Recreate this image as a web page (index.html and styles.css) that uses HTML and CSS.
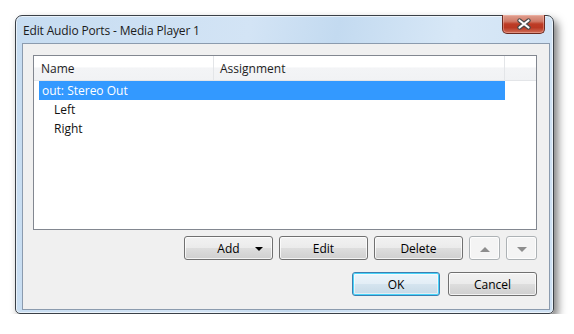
FILE: index.html
```html
<!DOCTYPE html>
<html>
<head>
<meta charset="utf-8">
<link rel="stylesheet" href="styles.css">
</head>
<body>
<div class="window">
  <div class="titlebar">
    <span class="title">Edit Audio Ports - Media Player 1</span>
    <div class="close">
      <svg width="16" height="12" viewBox="0 0 16 12">
        <path d="M3.5 2.5 L12.5 9.5 M12.5 2.5 L3.5 9.5" stroke="#4a4a4a" stroke-width="4.4" stroke-linecap="round"/>
        <path d="M3.5 2.5 L12.5 9.5 M12.5 2.5 L3.5 9.5" stroke="#ffffff" stroke-width="2.2" stroke-linecap="round"/>
      </svg>
    </div>
  </div>
  <div class="client">
    <div class="listbox">
      <div class="header">
        <div class="hcol c1">Name</div>
        <div class="hcol c2">Assignment</div>
        <div class="hcol c3"></div>
      </div>
      <div class="row selected">out: Stereo Out</div>
      <div class="row child">Left</div>
      <div class="row child">Right</div>
    </div>
    <div class="actions">
      <button class="btn wide add">Add<span class="caret"></span></button>
      <button class="btn wide">Edit</button>
      <button class="btn wide">Delete</button>
      <button class="btn small disabled"><span class="tri up"></span></button>
      <button class="btn small disabled"><span class="tri down"></span></button>
    </div>
    <div class="dialog-buttons">
      <button class="btn ok">OK</button>
      <button class="btn cancel">Cancel</button>
    </div>
  </div>
</div>
</body>
</html>
```
FILE: styles.css
```css
html, body {
  margin: 0;
  background: #ffffff;
}
body {
  padding: 15px 0 0 15px;
  font-family: "Segoe UI", "Open Sans", "Noto Sans", sans-serif;
  font-size: 12px;
  color: #000;
}
.window {
  box-sizing: border-box;
  width: 539px;
  height: 299px;
  border: 1px solid #3a4047;
  border-radius: 7px 7px 5px 5px;
  background: linear-gradient(100deg, #c6dcf1 0%, #d3e4f5 40%, #c3daf0 55%, #d8e8f7 75%, #cde0f3 100%);
  box-shadow: 4px 5px 9px rgba(0,0,0,0.5), inset 0 0 0 1px rgba(255,255,255,0.6);
  display: flex;
  flex-direction: column;
  padding: 0 3px 3px 6px;
}
.titlebar {
  height: 27px;
  display: flex;
  justify-content: space-between;
  align-items: flex-start;
}
.title {
  padding: 6px 0 0 1px;
  font-size: 12px;
  color: #1b1b1b;
  letter-spacing: -0.15px;
}
.close {
  width: 43px;
  height: 19px;
  box-sizing: border-box;
  margin: -1px 5px 0 0;
  border: 1px solid #6b2a20;
  border-top: none;
  border-radius: 0 0 5px 5px;
  background: linear-gradient(#dfa090 0%, #d07a68 35%, #bd3c26 50%, #b93823 70%, #d0705a 100%);
  box-shadow: inset 0 0 0 1px rgba(255,200,190,0.4);
  display: flex;
  align-items: center;
  justify-content: center;
}
.client {
  flex: 1;
  border: 1px solid #8b9bae;
  background: #f0f0f0;
  padding: 11px 12px 0 10px;
  display: flex;
  flex-direction: column;
}
.listbox {
  box-sizing: border-box;
  height: 175px;
  border: 1px solid #828790;
  background: #fff;
}
.header {
  display: flex;
  height: 24px;
  border-bottom: 1px solid #e3e5e8;
  background: linear-gradient(#ffffff 0%, #ffffff 45%, #f3f4f6 50%, #f1f2f4 100%);
}
.hcol {
  box-sizing: border-box;
  padding: 4px 0 0 7px;
  border-right: 1px solid #e3e5e8;
  color: #1e1e1e;
}
.c1 { width: 180px; }
.c2 { width: 291px; padding-left: 6px; }
.c3 { flex: 1; border-right: none; }
.row {
  height: 19px;
  line-height: 19px;
  width: 466px;
  margin-left: 5px;
  box-sizing: border-box;
  padding-left: 3px;
  color: #111;
}
.row.selected {
  background: #3399ff;
  color: #fff;
}
.row.child { padding-left: 15px; }
.actions {
  display: flex;
  justify-content: flex-end;
  gap: 6px;
  margin-top: 6px;
}
.dialog-buttons {
  display: flex;
  justify-content: flex-end;
  gap: 8px;
  margin-top: 12px;
}
.btn {
  box-sizing: border-box;
  height: 24px;
  border: 1px solid #707070;
  border-radius: 3px;
  background: linear-gradient(#f2f2f2 0%, #ebebeb 48%, #dddddd 52%, #cfcfcf 100%);
  box-shadow: inset 0 0 0 1px rgba(255,255,255,0.75);
  font-family: inherit;
  font-size: 12px;
  color: #000;
  padding: 0;
  position: relative;
}
.wide { width: 89px; }
.small { width: 31px; }
.caret {
  position: absolute;
  right: 9px;
  top: 10px;
  width: 0;
  height: 0;
  border-left: 4px solid transparent;
  border-right: 4px solid transparent;
  border-top: 4px solid #000;
}
.disabled {
  border-color: #adb2b5;
  background: #f4f4f4;
  box-shadow: inset 0 0 0 1px rgba(255,255,255,0.8);
}
.tri {
  display: inline-block;
  width: 0;
  height: 0;
  border-left: 5px solid transparent;
  border-right: 5px solid transparent;
  vertical-align: middle;
}
.tri.up { border-bottom: 5px solid #8d8d8d; }
.tri.down { border-top: 5px solid #8d8d8d; }
.ok {
  width: 88px;
  border-color: #3c7fb1;
  background: linear-gradient(#ecf5fb 0%, #e3eef6 48%, #d4e4ef 52%, #c6d9e6 100%);
  box-shadow: inset 0 0 0 1px #48d4fa, inset 0 0 0 2px rgba(255,255,255,0.5);
}
.cancel { width: 89px; }
```
